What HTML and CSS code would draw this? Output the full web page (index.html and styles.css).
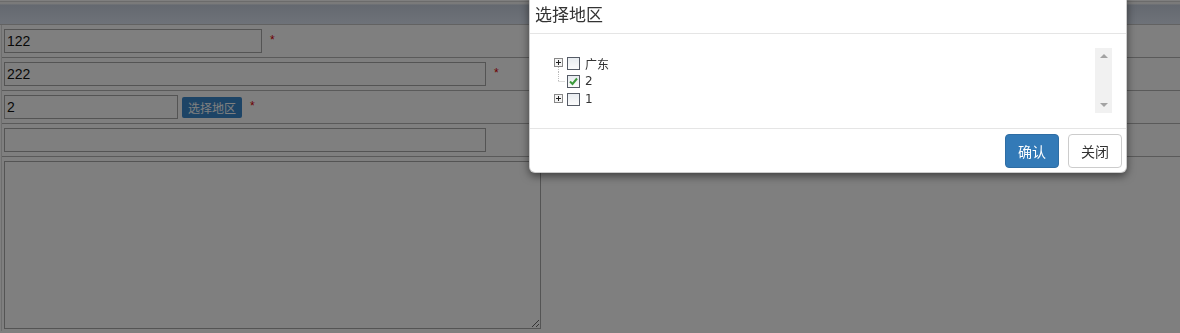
FILE: index.html
```html
<!DOCTYPE html>
<html lang="zh-CN">
<head>
    <meta charset="UTF-8">
    <title>选择地区</title>
    <link rel="stylesheet" href="styles.css">
</head>
<body>

<!-- Page form behind the dialog -->
<div class="top-bar"></div>
<div class="form-table">
    <div class="form-row">
        <input type="text" class="field w-short" value="122">
        <span class="req">*</span>
    </div>
    <div class="form-row">
        <input type="text" class="field w-long" value="222">
        <span class="req">*</span>
    </div>
    <div class="form-row">
        <input type="text" class="field w-area" value="2">
        <button class="pick-btn">选择地区</button>
        <span class="req">*</span>
    </div>
    <div class="form-row">
        <input type="text" class="field w-long" value="">
    </div>
    <div class="form-row">
        <textarea class="memo"></textarea>
    </div>
</div>

<div class="backdrop"></div>

<!-- Area dialog -->
<div class="modal">
    <div class="modal-header">选择地区</div>
    <div class="modal-body">
        <div class="tree-box">
            <ul class="tree">
                <li class="node">
                    <svg class="switch" width="12" height="18" viewBox="0 0 12 18">
                        <line x1="5.5" y1="13" x2="5.5" y2="18" stroke="#bbb" stroke-dasharray="1 1"/>
                        <rect x="1.5" y="4.5" width="8" height="8" fill="#f4f4f4" stroke="#888"/>
                        <line x1="3" y1="8.5" x2="8" y2="8.5" stroke="#222"/>
                        <line x1="5.5" y1="6" x2="5.5" y2="11" stroke="#222"/>
                    </svg>
                    <span class="chk"></span>
                    <span class="label">广东</span>
                </li>
                <li class="node">
                    <svg class="switch" width="12" height="18" viewBox="0 0 12 18">
                        <line x1="5.5" y1="0" x2="5.5" y2="9" stroke="#bbb" stroke-dasharray="1 1"/>
                        <line x1="5.5" y1="9.5" x2="12" y2="9.5" stroke="#bbb" stroke-dasharray="1 1"/>
                    </svg>
                    <span class="chk checked">
                        <svg width="11" height="11" viewBox="0 0 11 11">
                            <path d="M2 5.5 L4.5 8 L9 2.5" fill="none" stroke="#3c9a3c" stroke-width="2"/>
                        </svg>
                    </span>
                    <span class="label">2</span>
                </li>
                <li class="node">
                    <svg class="switch" width="12" height="18" viewBox="0 0 12 18">
                        <rect x="1.5" y="4.5" width="8" height="8" fill="#f4f4f4" stroke="#888"/>
                        <line x1="3" y1="8.5" x2="8" y2="8.5" stroke="#222"/>
                        <line x1="5.5" y1="6" x2="5.5" y2="11" stroke="#222"/>
                    </svg>
                    <span class="chk"></span>
                    <span class="label">1</span>
                </li>
            </ul>
            <div class="scroll-bar">
                <span class="arrow up"></span>
                <span class="arrow down"></span>
            </div>
        </div>
    </div>
    <div class="modal-footer">
        <button class="btn btn-primary">确认</button>
        <button class="btn btn-default">关闭</button>
    </div>
</div>

</body>
</html>
```

FILE: styles.css
```css
/* General styles */
body {
    font-family: "Liberation Sans", "Noto Sans CJK SC", sans-serif;
    font-size: 14px;
    background-color: #fff;
    margin: 0;
    padding: 0;
}

/* Page header strip */
.top-bar {
    height: 20px;
    margin-top: 1px;
    padding-bottom: 2px;
    border-top: 1px solid #d6d6d6;
    border-bottom: 1px solid #c4c4c4;
    background: linear-gradient(#eef1f5 0, #eef1f5 2px, #c9d2e0 3px, #dde5f2 100%);
    box-shadow: inset 0 2px 0 #f4f4f4;
}

/* Form table */
.form-table {
    margin-left: 1px;
    border-left: 1px solid #dcdcdc;
}

.form-row {
    display: flex;
    align-items: center;
    gap: 8px;
    height: 32px;
    padding-left: 2px;
    border-bottom: 1px solid #b4b4b4;
}

.form-row:last-child {
    height: auto;
    padding-top: 4px;
    padding-bottom: 2px;
    border-bottom: none;
}

.field {
    box-sizing: border-box;
    height: 24px;
    margin: 0;
    padding: 1px 2px;
    border: 1px solid #a9a9a9;
    font-family: "Liberation Sans", sans-serif;
    font-size: 14px;
    color: #111;
    background-color: #fff;
}

.w-short { width: 258px; }
.w-long  { width: 482px; }
.w-area  { width: 174px; }

.req {
    color: #d00;
    font-size: 12px;
    align-self: flex-start;
    margin-top: 8px;
}

.pick-btn {
    height: 21px;
    width: 60px;
    margin-left: -4px;
    padding: 0;
    border: none;
    border-radius: 2px;
    background-color: #3a88cc;
    color: #fff;
    font-family: "Noto Sans CJK SC", sans-serif;
    font-size: 12px;
}

.memo {
    box-sizing: border-box;
    width: 537px;
    height: 168px;
    margin: 0;
    border: 1px solid #a9a9a9;
    background-color: #fff;
    resize: both;
}

/* Dim layer */
.backdrop {
    position: fixed;
    inset: 0;
    background-color: rgba(0, 0, 0, 0.5);
}

/* Dialog */
.modal {
    position: absolute;
    top: -6px;
    left: 529px;
    width: 598px;
    box-sizing: border-box;
    background-color: #fff;
    border: 1px solid rgba(0, 0, 0, 0.2);
    border-radius: 6px;
    box-shadow: 0 3px 9px rgba(0, 0, 0, 0.5);
}

.modal-header {
    height: 34px;
    padding: 4px 5px 0;
    line-height: 30px;
    font-family: "Noto Sans CJK SC", sans-serif;
    font-size: 17px;
    color: #333;
    border-bottom: 1px solid #e5e5e5;
}

.modal-body {
    padding: 14px 14px 15px 15px;
}

.tree-box {
    display: flex;
    height: 65px;
}

.tree {
    flex: 1;
    list-style: none;
    margin: 0;
    padding: 6px 0 0 8px;
}

.node {
    display: flex;
    align-items: center;
    height: 18px;
}

.switch {
    display: block;
    flex-shrink: 0;
}

.chk {
    box-sizing: border-box;
    display: flex;
    align-items: center;
    justify-content: center;
    width: 13px;
    height: 13px;
    margin-left: 2px;
    border: 1px solid #555b66;
    background: linear-gradient(#e8ecf0, #fbfbfb);
}

.label {
    margin-left: 5px;
    font-family: "DejaVu Sans", "Noto Sans CJK SC", sans-serif;
    font-size: 12px;
    color: #333;
}

.scroll-bar {
    width: 17px;
    background-color: #f1f1f1;
    display: flex;
    flex-direction: column;
    justify-content: space-between;
    align-items: center;
    padding: 6px 0;
    box-sizing: border-box;
}

.arrow {
    width: 0;
    height: 0;
    border-left: 4px solid transparent;
    border-right: 4px solid transparent;
}

.arrow.up {
    border-bottom: 4px solid #a3a3a3;
}

.arrow.down {
    border-top: 4px solid #a3a3a3;
}

.modal-footer {
    display: flex;
    justify-content: flex-end;
    gap: 9px;
    padding: 5px 4px 4px;
    border-top: 1px solid #e5e5e5;
}

.btn {
    width: 54px;
    height: 34px;
    padding: 0;
    border-radius: 4px;
    font-family: "Noto Sans CJK SC", sans-serif;
    font-size: 14px;
}

.btn-primary {
    background-color: #337ab7;
    border: 1px solid #2e6da4;
    color: #fff;
}

.btn-default {
    background-color: #fff;
    border: 1px solid #ccc;
    color: #333;
}
```
